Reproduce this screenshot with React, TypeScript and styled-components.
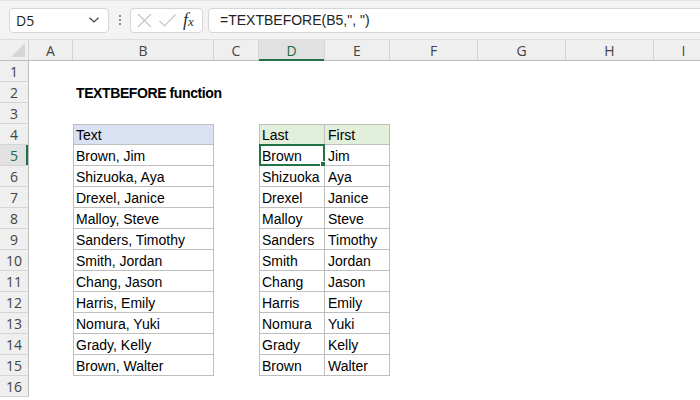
import { FC } from "react";
import styled, { createGlobalStyle } from "styled-components";

const GlobalStyle = createGlobalStyle`
  html, body {
    margin: 0;
    padding: 0;
    background: #ffffff;
    overflow: hidden;
  }
  body {
    font-family: "Liberation Sans", Arial, sans-serif;
  }
`;

const COLS = [
  { key: "A", width: 44 },
  { key: "B", width: 141 },
  { key: "C", width: 45 },
  { key: "D", width: 66 },
  { key: "E", width: 65 },
  { key: "F", width: 88 },
  { key: "G", width: 88 },
  { key: "H", width: 88 },
  { key: "I", width: 60 },
];

const GRID = `29px ${COLS.map((c) => c.width + "px").join(" ")}`;

const names: [string, string, string][] = [
  ["Brown, Jim", "Brown", "Jim"],
  ["Shizuoka, Aya", "Shizuoka", "Aya"],
  ["Drexel, Janice", "Drexel", "Janice"],
  ["Malloy, Steve", "Malloy", "Steve"],
  ["Sanders, Timothy", "Sanders", "Timothy"],
  ["Smith, Jordan", "Smith", "Jordan"],
  ["Chang, Jason", "Chang", "Jason"],
  ["Harris, Emily", "Harris", "Emily"],
  ["Nomura, Yuki", "Nomura", "Yuki"],
  ["Grady, Kelly", "Grady", "Kelly"],
  ["Brown, Walter", "Brown", "Walter"],
];

type CellKind = "plain" | "blueHead" | "greenHead" | "body";

interface CellData {
  text?: string;
  kind?: CellKind;
  first?: boolean;
  bold?: boolean;
  selected?: boolean;
}

const buildRow = (r: number): Record<string, CellData> => {
  if (r === 2) return { B: { text: "TEXTBEFORE function", bold: true } };
  if (r === 4)
    return {
      B: { text: "Text", kind: "blueHead", first: true },
      D: { text: "Last", kind: "greenHead", first: true },
      E: { text: "First", kind: "greenHead" },
    };
  if (r >= 5 && r <= 15) {
    const [full, last, first] = names[r - 5];
    return {
      B: { text: full, kind: "body", first: true },
      D: { text: last, kind: "body", first: true, selected: r === 5 },
      E: { text: first, kind: "body" },
    };
  }
  return {};
};

const NameBox: FC = () => (
  <NameField>
    <span>D5</span>
    <svg width="12" height="8" viewBox="0 0 12 8">
      <path d="M1.5 1.8 L6 6 L10.5 1.8" fill="none" stroke="#444" strokeWidth="1.2" />
    </svg>
  </NameField>
);

const FxBox: FC = () => (
  <FxField>
    <svg width="17" height="17" viewBox="0 0 17 17">
      <path d="M2 2 L15 15 M15 2 L2 15" stroke="#c4c4c4" strokeWidth="1.1" />
    </svg>
    <svg width="19" height="17" viewBox="0 0 19 17">
      <path d="M1.5 9 L6.5 14 L17.5 2.5" fill="none" stroke="#c4c4c4" strokeWidth="1.1" />
    </svg>
    <FxLabel>
      f<sub>x</sub>
    </FxLabel>
  </FxField>
);

const App: FC = () => {
  const rows = Array.from({ length: 16 }, (_, i) => i + 1);
  return (
    <>
      <GlobalStyle />
      <Page>
        <Toolbar>
          <NameBox />
          <Dots>
            <i />
            <i />
            <i />
          </Dots>
          <FxBox />
          <FormulaField>=TEXTBEFORE(B5,", ")</FormulaField>
        </Toolbar>
        <Sheet>
          <HeaderRow>
            <Corner>
              <svg width="14" height="14" viewBox="0 0 14 14">
                <path d="M14 0 L14 14 L0 14 Z" fill="#d6d6d6" />
              </svg>
            </Corner>
            {COLS.map((c) => (
              <ColHead key={c.key} $active={c.key === "D"}>
                {c.key}
              </ColHead>
            ))}
          </HeaderRow>
          {rows.map((r) => {
            const data = buildRow(r);
            return (
              <Row key={r}>
                <RowHead $active={r === 5}>{r}</RowHead>
                {COLS.map((c) => {
                  const cell = data[c.key] || {};
                  return (
                    <Cell
                      key={c.key}
                      $kind={cell.kind || "plain"}
                      $first={!!cell.first}
                      $bold={!!cell.bold}
                    >
                      {cell.text}
                      {cell.selected && (
                        <Selection>
                          <Handle />
                        </Selection>
                      )}
                    </Cell>
                  );
                })}
              </Row>
            );
          })}
        </Sheet>
      </Page>
    </>
  );
};

export default App;

const Page = styled.div`
  width: 700px;
  height: 400px;
  overflow: hidden;
  background: #ffffff;
`;

const Toolbar = styled.div`
  height: 40px;
  box-sizing: border-box;
  background: #f3f3f3;
  border-top: 1px solid #e4e4e4;
  border-bottom: 1px solid #dcdcdc;
  display: flex;
  align-items: center;
  padding: 0 0 0 9px;
`;

const NameField = styled.div`
  width: 100px;
  height: 25px;
  box-sizing: border-box;
  background: #ffffff;
  border: 1px solid #d6d6d6;
  border-radius: 4px;
  display: flex;
  align-items: center;
  justify-content: space-between;
  padding: 0 8px 0 6px;
  font-family: "Open Sans", sans-serif;
  font-size: 14px;
  color: #222;
`;

const Dots = styled.div`
  width: 21px;
  display: flex;
  flex-direction: column;
  align-items: center;
  gap: 2px;

  i {
    display: block;
    width: 2px;
    height: 2px;
    background: #8a8a8a;
  }
`;

const FxField = styled.div`
  width: 73px;
  height: 25px;
  box-sizing: border-box;
  background: #ffffff;
  border: 1px solid #d6d6d6;
  border-radius: 4px;
  display: flex;
  align-items: center;
  gap: 5px;
  padding: 0 0 0 5px;
`;

const FxLabel = styled.span`
  font-family: "Liberation Serif", "Times New Roman", serif;
  font-style: italic;
  font-size: 18px;
  color: #333;
  margin-left: 1px;

  sub {
    font-size: 13px;
    vertical-align: baseline;
  }
`;

const FormulaField = styled.div`
  flex: 1;
  height: 25px;
  margin-left: 5px;
  margin-right: -6px;
  box-sizing: border-box;
  background: #ffffff;
  border: 1px solid #d6d6d6;
  border-radius: 4px;
  display: flex;
  align-items: center;
  padding-left: 11px;
  font-size: 14px;
  color: #222;
`;

const Sheet = styled.div`
  display: flex;
  flex-direction: column;
`;

const HeaderRow = styled.div`
  display: grid;
  grid-template-columns: ${GRID};
  height: 21px;
  box-sizing: border-box;
  background: #efefef;
  border-bottom: 1px solid #bdbdbd;
`;

const Corner = styled.div`
  display: flex;
  align-items: flex-end;
  justify-content: flex-end;
  padding: 0 3px 3px 0;
  border-right: 1px solid #d4d4d4;
`;

const ColHead = styled.div<{ $active: boolean }>`
  display: flex;
  align-items: center;
  justify-content: center;
  box-sizing: border-box;
  border-right: 1px solid #d4d4d4;
  font-family: "Open Sans", sans-serif;
  font-size: 14px;
  color: ${(p) => (p.$active ? "#1d6b3c" : "#444")};
  background: ${(p) => (p.$active ? "#e1e1e1" : "transparent")};
  box-shadow: ${(p) => (p.$active ? "inset 0 -2px 0 #217346" : "none")};
  margin-bottom: ${(p) => (p.$active ? "-1px" : "0")};
`;

const Row = styled.div`
  display: grid;
  grid-template-columns: ${GRID};
  height: 21px;
`;

const RowHead = styled.div<{ $active: boolean }>`
  display: flex;
  align-items: center;
  justify-content: center;
  box-sizing: border-box;
  background: ${(p) => (p.$active ? "#e1e1e1" : "#efefef")};
  border-bottom: 1px solid #d4d4d4;
  border-right: 1px solid #bdbdbd;
  box-shadow: ${(p) => (p.$active ? "inset -2px 0 0 #217346" : "none")};
  font-family: "Open Sans", sans-serif;
  font-size: 14px;
  color: ${(p) => (p.$active ? "#1d6b3c" : "#444")};
`;

const headBg: Record<CellKind, string> = {
  plain: "transparent",
  blueHead: "#d9e1f2",
  greenHead: "#e2efda",
  body: "#ffffff",
};

const Cell = styled.div<{ $kind: CellKind; $first: boolean; $bold: boolean }>`
  position: relative;
  box-sizing: border-box;
  display: flex;
  align-items: center;
  padding-left: ${(p) => (p.$first ? "2px" : "3px")};
  padding-top: 1px;
  font-size: 14px;
  font-weight: ${(p) => (p.$bold ? 700 : 400)};
  letter-spacing: ${(p) => (p.$bold ? "-0.4px" : "0")};
  white-space: nowrap;
  color: #000;
  background: ${(p) => headBg[p.$kind]};
  ${(p) =>
    p.$kind !== "plain"
      ? `
    border-right: 1px solid #bfbfbf;
    border-bottom: 1px solid #bfbfbf;
    ${p.$first ? "border-left: 1px solid #bfbfbf;" : ""}
    ${p.$kind !== "body" ? "border-top: 1px solid #bfbfbf;" : ""}
  `
      : ""}
`;

const Selection = styled.div`
  position: absolute;
  left: -1px;
  top: -1px;
  right: -1px;
  bottom: -1px;
  border: 2px solid #217346;
  pointer-events: none;
`;

const Handle = styled.div`
  position: absolute;
  right: -5px;
  bottom: -5px;
  width: 6px;
  height: 6px;
  background: #217346;
  border: 1px solid #ffffff;
`;
